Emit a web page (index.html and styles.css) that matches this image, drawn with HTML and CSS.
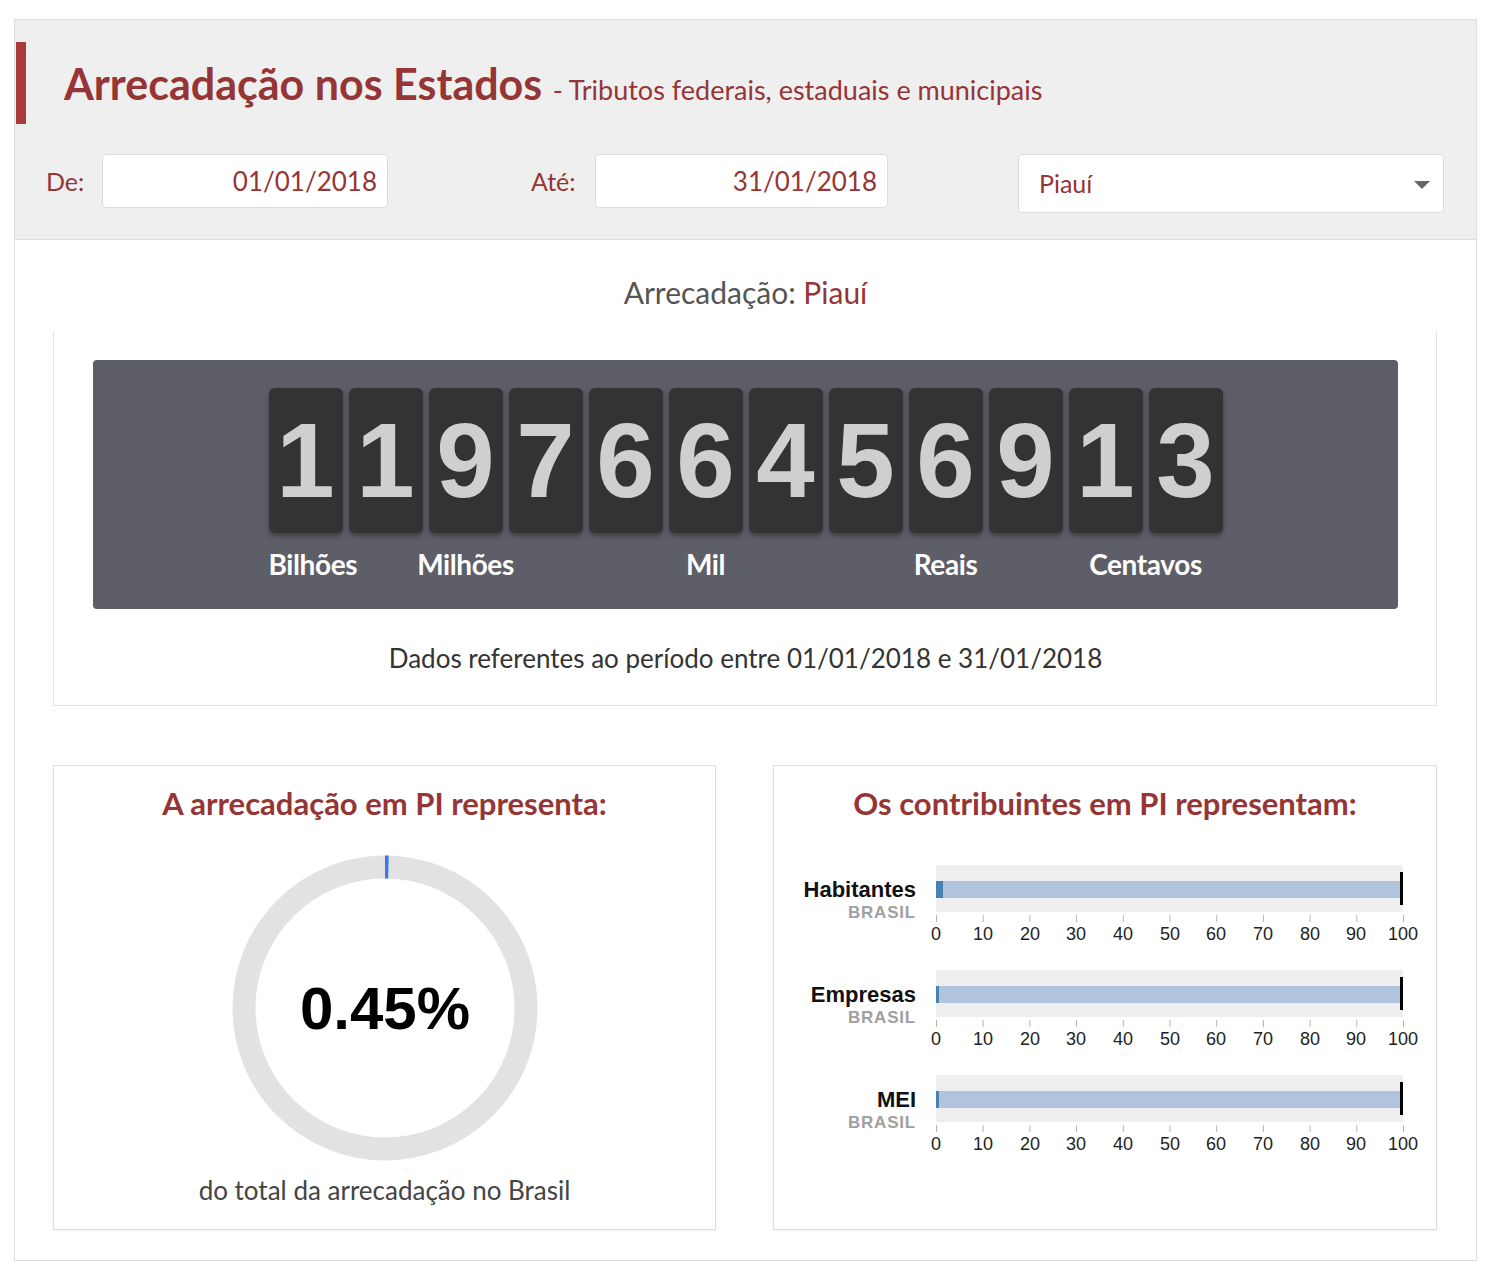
FILE: index.html
```html
<!DOCTYPE html>
<html lang="pt-BR">
<head>
    <meta charset="UTF-8">
    <meta name="viewport" content="width=device-width, initial-scale=1.0">
    <title>Arrecadação nos Estados</title>

    <link rel="stylesheet" href="styles.css">
</head>
<body>
    <div class="page">
        <div class="header">
            <div class="title-row">
                <h1>Arrecadação nos Estados <span class="subtitle">- Tributos federais, estaduais e municipais</span></h1>
            </div>

            <div class="filters">
                <div class="field field-de">
                    <label>De:</label>
                    <input type="text" class="date-input" value="01/01/2018">
                </div>
                <div class="field field-ate">
                    <label>Até:</label>
                    <input type="text" class="date-input" value="31/01/2018">
                </div>
                <div class="field">
                    <div class="select">Piauí <span class="caret"></span></div>
                </div>
            </div>
        </div>

        <div class="state-line">Arrecadação: <span>Piauí</span></div>

        <div class="counter-card">
            <div class="counter">
                <div class="digits">
                    <div class="digit">1</div>
                    <div class="digit">1</div>
                    <div class="digit">9</div>
                    <div class="digit">7</div>
                    <div class="digit">6</div>
                    <div class="digit">6</div>
                    <div class="digit">4</div>
                    <div class="digit">5</div>
                    <div class="digit">6</div>
                    <div class="digit">9</div>
                    <div class="digit">1</div>
                    <div class="digit">3</div>
                </div>
                <div class="units">
                    <div class="unit u-bilhoes">Bilhões</div>
                    <div class="unit u-milhoes">Milhões</div>
                    <div class="unit u-mil">Mil</div>
                    <div class="unit u-reais">Reais</div>
                    <div class="unit u-centavos">Centavos</div>
                </div>
            </div>
            <p class="period">Dados referentes ao período entre 01/01/2018 e 31/01/2018</p>
        </div>

        <div class="cards">
            <div class="card">
                <h2>A arrecadação em PI representa:</h2>
                <svg class="gauge" width="310" height="310" viewBox="0 0 310 310">
                    <circle cx="155" cy="155" r="141" fill="none" stroke="#e2e2e2" stroke-width="23"/>
                    <!-- 0.45% do círculo -->
                    <circle cx="155" cy="155" r="141" fill="none" stroke="#3c7be6" stroke-width="23"
                        stroke-dasharray="3.5 1000" transform="rotate(-90 155 155)"/>
                    <text x="155" y="176" text-anchor="middle" class="gauge-value">0.45%</text>
                </svg>
                <p class="gauge-caption">do total da arrecadação no Brasil</p>
            </div>

            <div class="card">
                <h2>Os contribuintes em PI representam:</h2>
                <svg class="bullets" width="662" height="310" viewBox="0 0 662 310">
                    <g transform="translate(0,10)">
                        <rect x="162" y="0" width="467" height="47" fill="#eeeeee"/>
                        <rect x="162" y="16" width="465" height="17" fill="#b0c4de"/>
                        <rect x="162" y="16" width="7" height="17" fill="#4682b4"/>
                        <rect x="626" y="7" width="3" height="33" fill="#000"/>
                        <text x="142" y="32" class="b-label">Habitantes</text>
                        <text x="142" y="53" class="b-sub">BRASIL</text>
                        <g class="b-ticks">
                            <line x1="162.5" y1="50" x2="162.5" y2="57"/><line x1="209.2" y1="50" x2="209.2" y2="57"/>
                            <line x1="255.9" y1="50" x2="255.9" y2="57"/><line x1="302.6" y1="50" x2="302.6" y2="57"/>
                            <line x1="349.3" y1="50" x2="349.3" y2="57"/><line x1="396" y1="50" x2="396" y2="57"/>
                            <line x1="442.7" y1="50" x2="442.7" y2="57"/><line x1="489.4" y1="50" x2="489.4" y2="57"/>
                            <line x1="536.1" y1="50" x2="536.1" y2="57"/><line x1="582.8" y1="50" x2="582.8" y2="57"/>
                            <line x1="629.5" y1="50" x2="629.5" y2="57"/>
                        </g>
                        <g class="b-nums">
                            <text x="162" y="75">0</text><text x="209" y="75">10</text><text x="256" y="75">20</text>
                            <text x="302" y="75">30</text><text x="349" y="75">40</text><text x="396" y="75">50</text>
                            <text x="442" y="75">60</text><text x="489" y="75">70</text><text x="536" y="75">80</text>
                            <text x="582" y="75">90</text><text x="629" y="75">100</text>
                        </g>
                    </g>

                    <g transform="translate(0,115)">
                        <rect x="162" y="0" width="467" height="47" fill="#eeeeee"/>
                        <rect x="162" y="16" width="465" height="17" fill="#b0c4de"/>
                        <rect x="162" y="16" width="3" height="17" fill="#4682b4"/>
                        <rect x="626" y="7" width="3" height="33" fill="#000"/>
                        <text x="142" y="32" class="b-label">Empresas</text>
                        <text x="142" y="53" class="b-sub">BRASIL</text>
                        <g class="b-ticks">
                            <line x1="162.5" y1="50" x2="162.5" y2="57"/><line x1="209.2" y1="50" x2="209.2" y2="57"/>
                            <line x1="255.9" y1="50" x2="255.9" y2="57"/><line x1="302.6" y1="50" x2="302.6" y2="57"/>
                            <line x1="349.3" y1="50" x2="349.3" y2="57"/><line x1="396" y1="50" x2="396" y2="57"/>
                            <line x1="442.7" y1="50" x2="442.7" y2="57"/><line x1="489.4" y1="50" x2="489.4" y2="57"/>
                            <line x1="536.1" y1="50" x2="536.1" y2="57"/><line x1="582.8" y1="50" x2="582.8" y2="57"/>
                            <line x1="629.5" y1="50" x2="629.5" y2="57"/>
                        </g>
                        <g class="b-nums">
                            <text x="162" y="75">0</text><text x="209" y="75">10</text><text x="256" y="75">20</text>
                            <text x="302" y="75">30</text><text x="349" y="75">40</text><text x="396" y="75">50</text>
                            <text x="442" y="75">60</text><text x="489" y="75">70</text><text x="536" y="75">80</text>
                            <text x="582" y="75">90</text><text x="629" y="75">100</text>
                        </g>
                    </g>

                    <g transform="translate(0,220)">
                        <rect x="162" y="0" width="467" height="47" fill="#eeeeee"/>
                        <rect x="162" y="16" width="465" height="17" fill="#b0c4de"/>
                        <rect x="162" y="16" width="3" height="17" fill="#4682b4"/>
                        <rect x="626" y="7" width="3" height="33" fill="#000"/>
                        <text x="142" y="32" class="b-label">MEI</text>
                        <text x="142" y="53" class="b-sub">BRASIL</text>
                        <g class="b-ticks">
                            <line x1="162.5" y1="50" x2="162.5" y2="57"/><line x1="209.2" y1="50" x2="209.2" y2="57"/>
                            <line x1="255.9" y1="50" x2="255.9" y2="57"/><line x1="302.6" y1="50" x2="302.6" y2="57"/>
                            <line x1="349.3" y1="50" x2="349.3" y2="57"/><line x1="396" y1="50" x2="396" y2="57"/>
                            <line x1="442.7" y1="50" x2="442.7" y2="57"/><line x1="489.4" y1="50" x2="489.4" y2="57"/>
                            <line x1="536.1" y1="50" x2="536.1" y2="57"/><line x1="582.8" y1="50" x2="582.8" y2="57"/>
                            <line x1="629.5" y1="50" x2="629.5" y2="57"/>
                        </g>
                        <g class="b-nums">
                            <text x="162" y="75">0</text><text x="209" y="75">10</text><text x="256" y="75">20</text>
                            <text x="302" y="75">30</text><text x="349" y="75">40</text><text x="396" y="75">50</text>
                            <text x="442" y="75">60</text><text x="489" y="75">70</text><text x="536" y="75">80</text>
                            <text x="582" y="75">90</text><text x="629" y="75">100</text>
                        </g>
                    </g>
                </svg>
            </div>
        </div>
    </div>
</body>
</html>
```

FILE: styles.css
```css
body{
    margin: 0;
    background-color: #ffffff;
    font-family: Lato, "Open Sans", sans-serif;
    color: #444;
}

.page{
    width: 1461px;
    margin: 19px 0 0 14px;
    border: 1px solid #dddddd;
    padding-bottom: 30px;
}

/* cabeçalho */
.header{
    background-color: #efefef;
    border-bottom: 1px solid #dcdcdc;
    padding: 22px 0 26px 1px;
}

.title-row{
    display: flex;
    align-items: center;
    height: 82px;
    border-left: 10px solid #a83a3a;
}

h1{
    margin: 0;
    padding-left: 38px;
    font-size: 43px;
    font-weight: 700;
    line-height: 1;
    color: #963535;
}

.subtitle{
    font-size: 27px;
    font-weight: 400;
    margin-left: 0;
}

.filters{
    display: grid;
    grid-template-columns: 485px 487px 426px;
    margin-top: 30px;
    padding-left: 30px;
}

.field{
    display: flex;
    align-items: flex-start;
}

.field label{
    font-size: 25px;
    color: #963535;
    line-height: 54px;
}

.field-de label{
    width: 56px;
}

.field-ate label{
    width: 64px;
}

.date-input{
    box-sizing: border-box;
    height: 54px;
    border: 1px solid #dcdcdc;
    border-radius: 4px;
    background: #fff;
    font-family: Lato, sans-serif;
    font-size: 26px;
    color: #963535;
    text-align: right;
    padding: 0 10px 0 0;
    outline: none;
}

.field-de .date-input{
    width: 286px;
}

.field-ate .date-input{
    width: 293px;
}

.select{
    box-sizing: border-box;
    position: relative;
    width: 426px;
    height: 59px;
    border: 1px solid #dcdcdc;
    border-radius: 4px;
    background: #fff;
    font-size: 25px;
    line-height: 57px;
    padding-left: 20px;
    color: #963535;
}

.caret{
    position: absolute;
    right: 13px;
    top: 26px;
    border-left: 8px solid transparent;
    border-right: 8px solid transparent;
    border-top: 8px solid #666;
}

.state-line{
    margin-top: 35px;
    text-align: center;
    font-size: 30px;
    line-height: 34px;
    color: #555;
}

.state-line span{
    color: #963535;
}

/* contador */
.counter-card{
    margin: 22px 39px 0 38px;
    border: 1px solid #e4e4e4;
    border-top: none;
    padding: 29px 38px 31px 39px;
}

.counter{
    background-color: #5e5e69;
    border-radius: 4px;
    height: 249px;
    box-sizing: border-box;
    padding-top: 28px;
}

.digits,
.units{
    display: grid;
    grid-template-columns: repeat(12, 74px);
    column-gap: 6px;
    justify-content: center;
}

.digit{
    height: 145px;
    background-color: #333333;
    border-radius: 6px;
    box-shadow: 0 3px 5px rgba(0, 0, 0, 0.35);
    text-align: center;
    font-family: "Liberation Sans", Arial, sans-serif;
    font-weight: 700;
    font-size: 105px;
    line-height: 145px;
    color: #cfcfcf;
}

.units{
    margin-top: 16px;
}

.unit{
    color: #fff;
    font-weight: 700;
    font-size: 28px;
    line-height: 30px;
    text-align: center;
    white-space: nowrap;
    letter-spacing: -0.4px;
}

.u-bilhoes{
    grid-column: 1 / 2;
    text-align: left;
}

.u-milhoes{
    grid-column: 2 / 5;
}

.u-mil{
    grid-column: 5 / 8;
}

.u-reais{
    grid-column: 8 / 11;
}

.u-centavos{
    grid-column: 11 / 13;
}

.period{
    margin: 33px 0 0 0;
    text-align: center;
    font-size: 26px;
    line-height: 32px;
    color: #333;
}

/* cartões inferiores */
.cards{
    display: grid;
    grid-template-columns: 663px 664px;
    column-gap: 57px;
    margin: 59px 39px 0 38px;
}

.card{
    box-sizing: border-box;
    height: 465px;
    border: 1px solid #dddddd;
    box-shadow: 0 1px 2px rgba(0, 0, 0, 0.06);
    text-align: center;
    padding-top: 18px;
}

h2{
    margin: 0;
    font-size: 31px;
    line-height: 38px;
    font-weight: 700;
    color: #963535;
}

.gauge{
    display: block;
    margin: 31px auto 0 auto;
}

.gauge-value{
    font-family: "Liberation Sans", Arial, sans-serif;
    font-weight: 700;
    font-size: 60px;
    fill: #000;
}

.gauge-caption{
    margin: 11px 0 0 0;
    font-size: 26px;
    line-height: 32px;
    color: #444;
}

.bullets{
    display: block;
    margin-top: 33px;
}

.bullets text{
    font-family: "Liberation Sans", Arial, sans-serif;
}

.b-label{
    text-anchor: end;
    font-weight: 700;
    font-size: 22px;
    fill: #111;
}

.b-sub{
    text-anchor: end;
    font-weight: 700;
    font-size: 17px;
    letter-spacing: 0.8px;
    fill: #a0a0a0;
}

.b-ticks line{
    stroke: #b5b5b5;
    stroke-width: 1;
}

.b-nums text{
    text-anchor: middle;
    font-size: 18px;
    fill: #222;
}
```
